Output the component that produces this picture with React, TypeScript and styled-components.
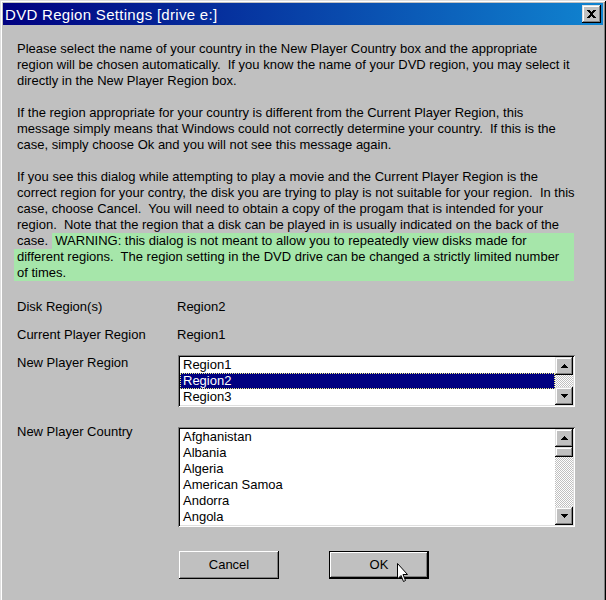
import styled, { createGlobalStyle } from "styled-components";

const GlobalStyle = createGlobalStyle`
  html, body {
    margin: 0;
    padding: 0;
    overflow: hidden;
    background: #c0c0c0;
  }
  body {
    font-family: "Liberation Sans", Arial, sans-serif;
  }
`;

const raised = `
  background: #c0c0c0;
  box-shadow: inset -1px -1px #000, inset 1px 1px #dfdfdf, inset -2px -2px #808080, inset 2px 2px #fff;
`;

const Window = styled.div`
  width: 606px;
  height: 606px;
  box-sizing: border-box;
  padding: 3px;
  background: #c0c0c0;
  box-shadow: inset 1px 1px #dfdfdf, inset -1px -1px #000, inset 2px 2px #fff, inset -2px -2px #808080;
`;

const TitleBar = styled.div`
  height: 22px;
  display: flex;
  align-items: center;
  justify-content: space-between;
  padding: 0 2px;
  background: linear-gradient(to right, #000080, #1084d0);
  color: #fff;
  font-size: 15px;
  letter-spacing: 0.3px;
`;

const CloseButton = styled.div`
  ${raised}
  width: 19px;
  height: 18px;
  display: flex;
  align-items: center;
  justify-content: center;
`;

const Body = styled.div`
  padding: 16px 0 0 14px;
  color: #000;
  font-size: 13px;
  line-height: 16px;
`;

const Message = styled.div`
  display: flex;
  flex-direction: column;
  gap: 16px;
`;

const Para = styled.div`
  white-space: pre;
`;

const Warning = styled.div`
  width: 560px;
  margin-left: -3px;
  padding-left: 3px;
  box-sizing: border-box;
  background: #a6e6aa;
`;

const Notch = styled.span`
  float: left;
  margin-left: -3px;
  padding-left: 3px;
  background: #c0c0c0;
`;

const Fields = styled.div`
  margin-top: 18px;
  display: flex;
  flex-direction: column;
`;

const Field = styled.div<{ $gap: number }>`
  display: grid;
  grid-template-columns: 160px 1fr;
  margin-top: ${(p) => p.$gap}px;
`;

const Label = styled.div<{ $offset?: number }>`
  margin-top: ${(p) => p.$offset ?? 0}px;
`;

const ListBox = styled.div<{ $rows: number }>`
  margin-left: 1px;
  width: 397px;
  height: ${(p) => p.$rows * 16 + 4}px;
  box-sizing: border-box;
  padding: 2px;
  display: flex;
  background: #fff;
  box-shadow: inset 1px 1px #808080, inset -1px -1px #fff, inset 2px 2px #000, inset -2px -2px #dfdfdf;
`;

const Items = styled.div`
  flex: 1;
  display: flex;
  flex-direction: column;
`;

const Item = styled.div<{ $selected?: boolean }>`
  height: 16px;
  padding-left: 3px;
  white-space: nowrap;
  background: ${(p) => (p.$selected ? "#000080" : "transparent")};
  color: ${(p) => (p.$selected ? "#fff" : "#000")};
  outline: ${(p) => (p.$selected ? "1px dotted #f0f080" : "none")};
  outline-offset: -1px;
`;

const ScrollBar = styled.div`
  width: 18px;
  display: flex;
  flex-direction: column;
`;

const ScrollButton = styled.div`
  ${raised}
  height: 18px;
  display: flex;
  align-items: center;
  justify-content: center;
`;

const Thumb = styled.div`
  ${raised}
  height: 10px;
`;

const Track = styled.div`
  flex: 1;
  background-image: conic-gradient(#fff 25%, #c0c0c0 0 50%, #fff 0 75%, #c0c0c0 0);
  background-size: 2px 2px;
`;

const Buttons = styled.div`
  margin-top: 24px;
  margin-left: 162px;
  display: flex;
  gap: 50px;
`;

const PushButton = styled.div<{ $default?: boolean }>`
  position: relative;
  width: 100px;
  height: 28px;
  box-sizing: border-box;
  display: flex;
  align-items: center;
  justify-content: center;
  background: #c0c0c0;
  box-shadow: ${(p) =>
    p.$default
      ? "inset 0 0 0 1px #000, inset -2px -2px #000, inset 2px 2px #fff, inset -3px -3px #808080"
      : "inset -1px -1px #000, inset 1px 1px #fff, inset -2px -2px #808080"};
`;

const Cursor = styled.svg`
  position: absolute;
  left: 68px;
  top: 12px;
`;

const Arrow = ({ up }: { up?: boolean }) => (
  <svg width="7" height="4" viewBox="0 0 7 4" shapeRendering="crispEdges">
    <path d={up ? "M3.5 0 L7 4 L0 4 Z" : "M0 0 L7 0 L3.5 4 Z"} fill="#000" />
  </svg>
);

const Scroll = ({ thumb }: { thumb?: boolean }) => (
  <ScrollBar>
    <ScrollButton>
      <Arrow up />
    </ScrollButton>
    {thumb && <Thumb />}
    <Track />
    <ScrollButton>
      <Arrow />
    </ScrollButton>
  </ScrollBar>
);

const regions = ["Region1", "Region2", "Region3"];
const countries = ["Afghanistan", "Albania", "Algeria", "American Samoa", "Andorra", "Angola"];

export default function App() {
  return (
    <>
      <GlobalStyle />
      <Window>
        <TitleBar>
          <span>DVD Region Settings [drive e:]</span>
          <CloseButton>
            <svg width="9" height="8" viewBox="0 0 9 8" shapeRendering="crispEdges">
              <path d="M1 0 L8 8 M8 0 L1 8" stroke="#000" strokeWidth="2" />
            </svg>
          </CloseButton>
        </TitleBar>
        <Body>
          <Message>
            <Para>
              <div>Please select the name of your country in the New Player Country box and the appropriate</div>
              <div>region will be chosen automatically.  If you know the name of your DVD region, you may select it</div>
              <div>directly in the New Player Region box.</div>
            </Para>
            <Para>
              <div>If the region appropriate for your country is different from the Current Player Region, this</div>
              <div>message simply means that Windows could not correctly determine your country.  If this is the</div>
              <div>case, simply choose Ok and you will not see this message again.</div>
            </Para>
            <Para>
              <div>If you see this dialog while attempting to play a movie and the Current Player Region is the</div>
              <div>correct region for your contry, the disk you are trying to play is not suitable for your region.  In this</div>
              <div>case, choose Cancel.  You will need to obtain a copy of the progam that is intended for your</div>
              <div>region.  Note that the region that a disk can be played in is usually indicated on the back of the</div>
              <Warning>
                <Notch>case. </Notch>
                <div> WARNING: this dialog is not meant to allow you to repeatedly view disks made for</div>
                <div>different regions.  The region setting in the DVD drive can be changed a strictly limited number</div>
                <div>of times.</div>
              </Warning>
            </Para>
          </Message>

          <Fields>
            <Field $gap={0}>
              <Label>Disk Region(s)</Label>
              <div>Region2</div>
            </Field>
            <Field $gap={12}>
              <Label>Current Player Region</Label>
              <div>Region1</div>
            </Field>
            <Field $gap={12}>
              <Label>New Player Region</Label>
              <ListBox $rows={3}>
                <Items>
                  {regions.map((r) => (
                    <Item key={r} $selected={r === "Region2"}>
                      {r}
                    </Item>
                  ))}
                </Items>
                <Scroll />
              </ListBox>
            </Field>
            <Field $gap={20}>
              <Label $offset={-3}>New Player Country</Label>
              <ListBox $rows={6}>
                <Items>
                  {countries.map((c) => (
                    <Item key={c}>{c}</Item>
                  ))}
                </Items>
                <Scroll thumb />
              </ListBox>
            </Field>
          </Fields>

          <Buttons>
            <PushButton>Cancel</PushButton>
            <PushButton $default>
              OK
              <Cursor width="12" height="20" viewBox="0 0 12 20">
                <path
                  d="M0.5 0.5 L0.5 16 L4 12.5 L6.5 18.5 L8.5 17.5 L6 11.5 L10.5 11.5 Z"
                  fill="#fff"
                  stroke="#000"
                  strokeWidth="1"
                />
              </Cursor>
            </PushButton>
          </Buttons>
        </Body>
      </Window>
    </>
  );
}
